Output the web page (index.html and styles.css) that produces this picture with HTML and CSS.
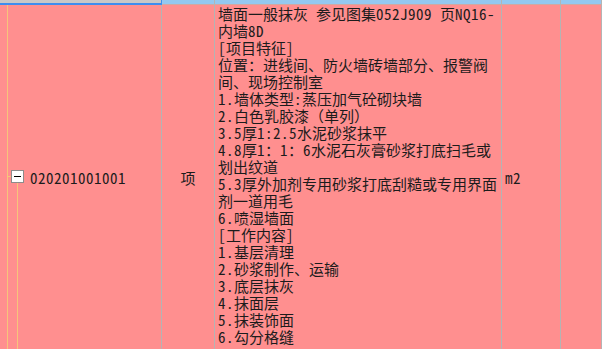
FILE: index.html
```html
<!DOCTYPE html>
<html>
<head>
<meta charset="utf-8">
<link rel="stylesheet" href="styles.css">
</head>
<body>
<div class="grid">
  <div class="hd hd-sel"></div>
  <div class="hd"></div>
  <div class="hd"></div>
  <div class="hd"></div>
  <div class="hd"></div>

  <div class="cell code">
    <span class="tree"><span class="toggle"><span class="minus"></span></span></span>
    <span class="code-text">020201001001</span>
  </div>
  <div class="cell unit-name">项</div>
  <div class="cell desc">墙面一般抹灰<span class="a"> </span>参见图集<span class="a">052J909 </span>页<span class="a">NQ16-</span><br>内墙<span class="a">8D</span><br><span class="a">[</span>项目特征<span class="a">]</span><br>位置：进线间、防火墙砖墙部分、报警阀<br>间、现场控制室<br><span class="a">1.</span>墙体类型<span class="a">:</span>蒸压加气砼砌块墙<br><span class="a">2.</span>白色乳胶漆（单列）<br><span class="a">3.5</span>厚<span class="a">1:2.5</span>水泥砂浆抹平<br><span class="a">4.8</span>厚<span class="a">1</span>：<span class="a">1</span>：<span class="a">6</span>水泥石灰膏砂浆打底扫毛或<br>划出纹道<br><span class="a">5.3</span>厚外加剂专用砂浆打底刮糙或专用界面<br>剂一道用毛<br><span class="a">6.</span>喷湿墙面<br><span class="a">[</span>工作内容<span class="a">]</span><br><span class="a">1.</span>基层清理<br><span class="a">2.</span>砂浆制作、运输<br><span class="a">3.</span>底层抹灰<br><span class="a">4.</span>抹面层<br><span class="a">5.</span>抹装饰面<br><span class="a">6.</span>勾分格缝</div>
  <div class="cell unit"><span class="a">m2</span></div>
  <div class="cell"></div>
</div>
</body>
</html>
```

FILE: styles.css
```css
html, body {
  margin: 0;
  padding: 0;
}
body {
  width: 602px;
  height: 349px;
  overflow: hidden;
  background: #ff8f8f;
  font-family: "Noto Sans Mono CJK SC", "Noto Sans CJK SC", monospace;
  font-size: 15px;
  color: #1c1c1c;
}
.grid {
  display: grid;
  grid-template-columns: 162px 53px 287px 59px 41px;
  grid-template-rows: 5px 344px;
}
.hd {
  box-sizing: border-box;
  background: #94c8f0;
  border-right: 1px solid #b4b4b4;
  border-bottom: 1px solid #cfa9a4;
}
.hd-sel {
  background: #c8c8c8;
  border-right: 1px solid #3d8ef0;
  border-bottom: 2px solid #3d8ef0;
}
.cell {
  box-sizing: border-box;
  border-right: 1px solid #b4b4b4;
  line-height: 17px;
  white-space: nowrap;
}
.a {
  letter-spacing: 0.5px;
}
.code {
  position: relative;
  display: flex;
  align-items: center;
  padding-left: 30px;
}
.code::before {
  content: "";
  position: absolute;
  left: 7px;
  top: 0;
  bottom: 0;
  width: 1px;
  background: #f7c47a;
}
.tree {
  position: absolute;
  left: 7px;
  top: 0;
  bottom: 0;
  width: 20px;
}
.tree::before {
  content: "";
  position: absolute;
  left: 0;
  top: 171px;
  width: 5px;
  height: 1px;
  background: #f7c47a;
}
.tree::after {
  content: "";
  position: absolute;
  left: 10px;
  top: 178px;
  bottom: 0;
  width: 1px;
  background: #f7c47a;
}
.toggle {
  position: absolute;
  left: 4px;
  top: 165px;
  width: 13px;
  height: 13px;
  box-sizing: border-box;
  border: 1px solid #8c8c8c;
  background: #ffffff;
  display: flex;
  align-items: center;
  justify-content: center;
}
.minus {
  width: 7px;
  height: 1px;
  background: #000;
}
.code-text {
  display: block;
  letter-spacing: 0.5px;
}
.unit-name {
  display: flex;
  align-items: center;
  justify-content: center;
}
.desc {
  padding-left: 3px;
}
.unit {
  display: flex;
  align-items: center;
  padding-left: 3px;
}
```
